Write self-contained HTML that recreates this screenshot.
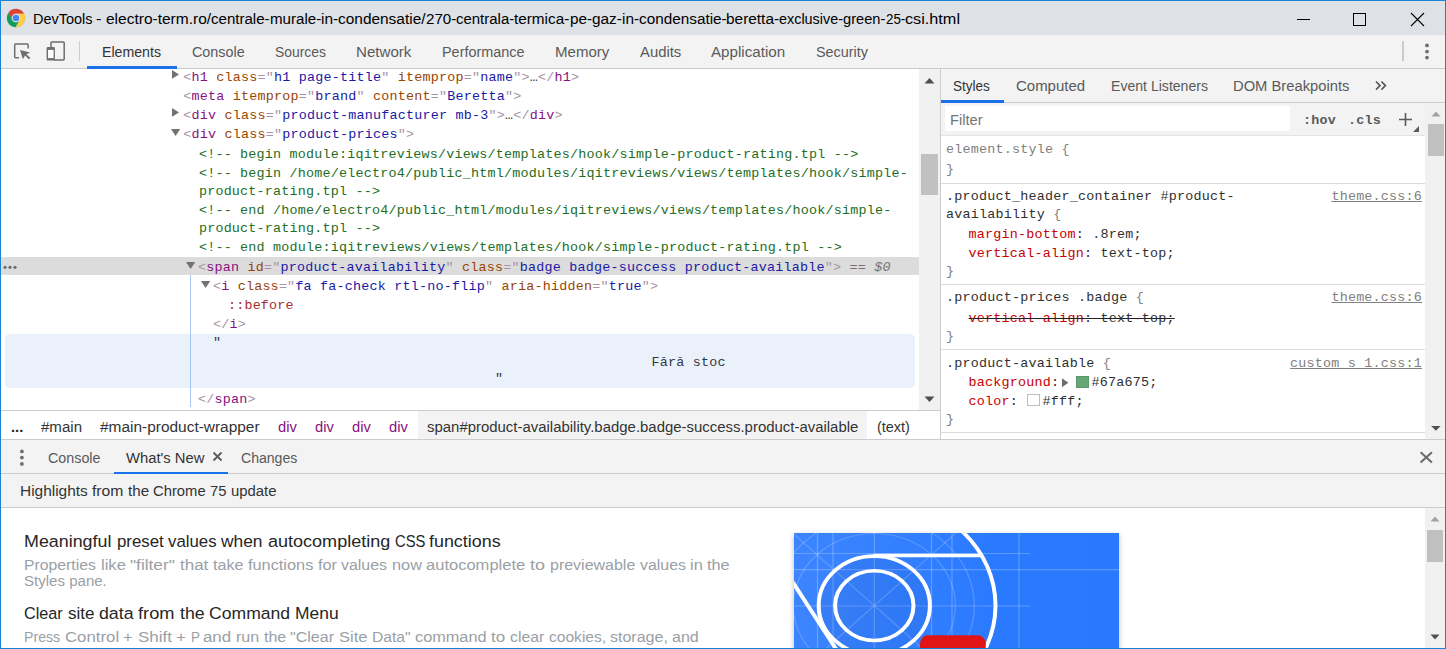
<!DOCTYPE html>
<html lang="en">
<head>
<meta charset="utf-8">
<title>DevTools</title>
<style>
html,body{margin:0;padding:0;}
body{width:1446px;height:649px;overflow:hidden;position:relative;background:#fff;font-family:'Liberation Sans',sans-serif;}
#win{position:absolute;left:0;top:0;width:1446px;height:649px;box-sizing:border-box;border:1px solid #1883d7;overflow:hidden;}
.abs{position:absolute;}
.s{position:absolute;display:inline-block;white-space:pre;line-height:20px;font-family:'Liberation Sans',sans-serif;transform-origin:0 50%;}
.m{position:absolute;white-space:pre;line-height:19px;font-size:13.4px;letter-spacing:0.21px;font-family:'Liberation Mono',monospace;color:#222;}
.tg{color:#881280}.br{color:#a894a6}.an{color:#994500}.av{color:#1a1aa6}.cm{color:#236e25}.el{color:#333}.eq{color:#737373;font-style:italic}
.ps{color:#a82e2e}.tx{color:#303942}
.g{color:#808080}.sel{color:#303030}.pn{color:#c80000}.pv{color:#303030}
.strike{text-decoration:line-through;text-decoration-color:#222}
.lnk{color:#808080;text-decoration:underline}
#titlebar{left:0;top:0;width:1444px;height:34px;background:#dee1e6;}
#toolbar{left:0;top:34px;width:1444px;height:33px;background:#f3f3f3;border-bottom:1px solid #cdcdcd;}
.hl{background:#1a73e8;}
</style>
</head>
<body>
<div id="win">
<div class="abs" style="left:-1px;top:-1px;width:1446px;height:649px;">
<!-- coordinates inside this wrapper equal page coordinates -->

<div class="abs" style="left:1px;top:1px;width:1444px;height:34px;background:#dee1e6"></div>
<div class="abs" style="left:1px;top:35px;width:1444px;height:33px;background:#f3f3f3"></div>
<div class="abs" style="left:1px;top:68px;width:1444px;height:1px;background:#cbcbcb"></div>

<!-- chrome logo -->
<svg class="abs" style="left:6px;top:7.75px" width="20" height="20" viewBox="0 0 48 48">
 <circle cx="24.2" cy="24.8" r="22.3" fill="#000" fill-opacity="0.12"/>
 <path d="M24 14 L43.6 14 A22 22 0 0 0 5.54 12.03 L15.34 29 A10 10 0 0 1 24 14 Z" fill="#db4437"/>
 <path d="M32.66 29 L22.86 45.97 A22 22 0 0 0 43.6 14 L24 14 A10 10 0 0 1 32.66 29 Z" fill="#ffcd40"/>
 <path d="M15.34 29 L5.54 12.03 A22 22 0 0 0 22.86 45.97 L32.66 29 A10 10 0 0 1 15.34 29 Z" fill="#0f9d58"/>
 <circle cx="24" cy="24" r="10.3" fill="#f1f1f1"/>
 <circle cx="24" cy="24" r="8" fill="#4285f4"/>
</svg>

<!-- window controls -->
<div class="abs" style="left:1297px;top:19px;width:13px;height:1px;background:#000"></div>
<div class="abs" style="left:1353px;top:13px;width:11px;height:11px;border:1px solid #000"></div>
<svg class="abs" style="left:1410px;top:12px" width="15" height="15" viewBox="0 0 15 15"><path d="M1 1 L14 14 M14 1 L1 14" stroke="#000" stroke-width="1.1" fill="none"/></svg>

<!-- toolbar icons -->
<svg class="abs" style="left:0;top:36px" width="90" height="32" viewBox="0 36 90 32">
 <path d="M18.9 57.65 H15.6 Q14.7 57.65 14.7 56.75 V44.9 Q14.7 44 15.6 44 H27.25 Q28.15 44 28.15 44.9 V48.4" fill="none" stroke="#6e6e6e" stroke-width="1.5"/>
 <path d="M20 50.1 L30.2 52.4 L26.4 54.3 L30.3 58 L28.9 59.3 L25 55.6 L22.9 59.2 Z" fill="#6e6e6e"/>
 <path d="M51 47.5 V42.7 Q51 41.9 51.8 41.9 H63.4 Q64.2 41.9 64.2 42.7 V59.1 Q64.2 59.9 63.4 59.9 H54" fill="none" stroke="#6e6e6e" stroke-width="1.5"/>
 <rect x="46.6" y="47.1" width="8.3" height="13.5" rx="1" fill="#6e6e6e"/>
 <rect x="48" y="49.9" width="5.6" height="8.2" fill="#fdfdfd"/>
</svg>
<div class="abs" style="left:79px;top:41px;width:1px;height:20px;background:#ccc"></div>
<div class="abs" style="left:1402px;top:41px;width:2px;height:20px;background:#cbcbcb"></div>
<svg class="abs" style="left:1423px;top:42px" width="8" height="20" viewBox="0 0 8 20"><circle cx="4" cy="3.4" r="1.9" fill="#6e6e6e"/><circle cx="4" cy="9.6" r="1.9" fill="#6e6e6e"/><circle cx="4" cy="15.6" r="1.9" fill="#6e6e6e"/></svg>
<div class="abs hl" style="left:87px;top:66px;width:90px;height:3px"></div>

<!-- elements panel -->
<div class="abs" style="left:1px;top:257px;width:918px;height:18px;background:#dcdcdc"></div>
<div class="abs" style="left:5px;top:334px;width:910px;height:54px;background:#ebf1fb;border-radius:5px"></div>
<div class="abs" style="left:190px;top:275px;width:1px;height:132px;background:#a9c7f3"></div>
<svg class="abs" style="left:3px;top:264px" width="16" height="7" viewBox="3 264 16 7"><circle cx="5.1" cy="267.3" r="1.6" fill="#6e6e6e"/><circle cx="10" cy="267.3" r="1.6" fill="#6e6e6e"/><circle cx="15" cy="267.3" r="1.6" fill="#6e6e6e"/></svg>
<!-- tree arrows -->
<svg class="abs" style="left:172.2px;top:70.2px" width="10" height="10" viewBox="0 0 10 10"><path d="M0 0 L7 4.4 L0 8.8 Z" fill="#727272"/></svg>
<svg class="abs" style="left:172.2px;top:108.2px" width="10" height="10" viewBox="0 0 10 10"><path d="M0 0 L7 4.4 L0 8.8 Z" fill="#727272"/></svg>
<svg class="abs" style="left:170.9px;top:128.9px" width="10" height="10" viewBox="0 0 10 10"><path d="M0 0 L9.2 0 L4.6 7 Z" fill="#727272"/></svg>
<svg class="abs" style="left:185.7px;top:261.9px" width="10" height="10" viewBox="0 0 10 10"><path d="M0 0 L9.2 0 L4.6 7 Z" fill="#727272"/></svg>
<svg class="abs" style="left:200.5px;top:280.9px" width="10" height="10" viewBox="0 0 10 10"><path d="M0 0 L9.2 0 L4.6 7 Z" fill="#727272"/></svg>

<!-- elements scrollbar -->
<div class="abs" style="left:919px;top:69px;width:21px;height:341px;background:#f1f1f1"></div>
<div class="abs" style="left:921px;top:154px;width:17px;height:41px;background:#c1c1c1"></div>
<svg class="abs" style="left:924px;top:77px" width="11" height="7" viewBox="0 0 11 7"><path d="M0.5 6.5 L5.5 1 L10.5 6.5 Z" fill="#505050"/></svg>
<svg class="abs" style="left:924px;top:396px" width="11" height="7" viewBox="0 0 11 7"><path d="M0.5 0.5 L5.5 6 L10.5 0.5 Z" fill="#505050"/></svg>
<div class="abs" style="left:940px;top:69px;width:1px;height:370px;background:#ccc"></div>

<!-- breadcrumbs -->
<div class="abs" style="left:1px;top:410px;width:939px;height:1px;background:#ccc"></div>
<div class="abs" style="left:418px;top:411px;width:449px;height:28px;background:#f3f3f3"></div>
<div class="abs" style="left:1px;top:439px;width:1444px;height:1px;background:#ccc"></div>

<!-- styles sidebar -->
<div class="abs" style="left:941px;top:69px;width:504px;height:33px;background:#f3f3f3"></div>
<div class="abs" style="left:941px;top:102px;width:504px;height:1px;background:#ccc"></div>
<div class="abs hl" style="left:941px;top:100px;width:63px;height:3px"></div>
<div class="abs" style="left:941px;top:103px;width:484px;height:32px;background:#f3f3f3"></div>
<div class="abs" style="left:941px;top:135px;width:484px;height:1px;background:#e4e4e4"></div>
<div class="abs" style="left:945px;top:106px;width:345px;height:25px;background:#fff"></div>
<svg class="abs" style="left:1375px;top:80px" width="12" height="11" viewBox="0 0 12 11"><path d="M1 1.5 L5 5.6 L1 9.7 M6.4 1.5 L10.4 5.6 L6.4 9.7" fill="none" stroke="#5a5a5a" stroke-width="1.7"/></svg>
<div class="m" style="left:1303px;top:111px;font-weight:bold;color:#5a5a5a">:hov</div>
<div class="m" style="left:1348px;top:111px;font-weight:bold;color:#5a5a5a">.cls</div>
<svg class="abs" style="left:1398px;top:112px" width="22" height="22" viewBox="0 0 22 22"><path d="M7.5 1 V14 M1 7.5 H14" stroke="#5a5a5a" stroke-width="1.6" fill="none"/><path d="M21 14 V20 H15 Z" fill="#5a5a5a"/></svg>
<div class="abs" style="left:941px;top:183px;width:484px;height:1px;background:#dcdcdc"></div>
<div class="abs" style="left:941px;top:284px;width:484px;height:1px;background:#dcdcdc"></div>
<div class="abs" style="left:941px;top:349px;width:484px;height:1px;background:#dcdcdc"></div>
<div class="abs" style="left:941px;top:432px;width:484px;height:1px;background:#dcdcdc"></div>
<!-- swatches -->
<svg class="abs" style="left:1061px;top:377px" width="9" height="12" viewBox="0 0 9 12"><path d="M1 1.2 L7.4 5.7 L1 10.2 Z" fill="#6e6e6e"/></svg>
<div class="abs" style="left:1076px;top:376px;width:11px;height:10px;background:#67a675;border:1px solid #5a9a68"></div>
<div class="abs" style="left:1027px;top:394px;width:11px;height:10px;background:#fff;border:1px solid #bdbdbd"></div>
<!-- styles scrollbar -->
<div class="abs" style="left:1425px;top:103px;width:20px;height:336px;background:#f1f1f1"></div>
<div class="abs" style="left:1428px;top:124px;width:16px;height:32px;background:#c1c1c1"></div>
<svg class="abs" style="left:1431px;top:111px" width="10" height="6" viewBox="0 0 10 6"><path d="M0.5 5.5 L5 0.5 L9.5 5.5 Z" fill="#a3a3a3"/></svg>
<svg class="abs" style="left:1431px;top:426px" width="10" height="6" viewBox="0 0 10 6"><path d="M0.2 0 L4.9 4.8 L9.6 0 Z" fill="#505050"/></svg>

<!-- drawer -->
<div class="abs" style="left:1px;top:440px;width:1444px;height:33px;background:#f3f3f3"></div>
<div class="abs" style="left:1px;top:473px;width:1444px;height:1px;background:#ccc"></div>
<div class="abs hl" style="left:114px;top:472px;width:114px;height:2px"></div>
<div class="abs" style="left:1px;top:474px;width:1444px;height:33px;background:#f3f3f3"></div>
<div class="abs" style="left:1px;top:507px;width:1444px;height:1px;background:#ccc"></div>
<svg class="abs" style="left:18px;top:447px" width="8" height="20" viewBox="0 0 8 20"><circle cx="3.9" cy="4.4" r="1.9" fill="#6e6e6e"/><circle cx="3.9" cy="10.6" r="1.9" fill="#6e6e6e"/><circle cx="3.9" cy="16.9" r="1.9" fill="#6e6e6e"/></svg>
<svg class="abs" style="left:212px;top:451px" width="11" height="11" viewBox="0 0 11 11"><path d="M1.5 1.5 L9.5 9.5 M9.5 1.5 L1.5 9.5" stroke="#5a5a5a" stroke-width="1.8" fill="none"/></svg>
<svg class="abs" style="left:1418px;top:450px" width="16" height="15" viewBox="1418 450 16 15"><path d="M1420.6 452.2 L1431.9 462.6 M1431.9 452.2 L1420.6 462.6" stroke="#6a6a6a" stroke-width="2" fill="none"/></svg>
<!-- drawer scrollbar -->
<div class="abs" style="left:1425px;top:508px;width:20px;height:140px;background:#f1f1f1"></div>
<div class="abs" style="left:1427px;top:530px;width:16px;height:32px;background:#c1c1c1"></div>
<svg class="abs" style="left:1430px;top:516px" width="10" height="6" viewBox="0 0 10 6"><path d="M0.5 5.5 L5 0.5 L9.5 5.5 Z" fill="#a3a3a3"/></svg>
<svg class="abs" style="left:1430px;top:634px" width="10" height="6" viewBox="0 0 10 6"><path d="M0.5 0.5 L5 5.5 L9.5 0.5 Z" fill="#505050"/></svg>

<!-- what's new image -->
<div class="abs" style="left:794px;top:533px;width:325px;height:130px;box-shadow:0 2px 5px rgba(0,0,0,.28)"></div>
<svg class="abs" style="left:794px;top:533px" width="325" height="116" viewBox="794 533 325 116">
 <defs><linearGradient id="bg" x1="0" y1="0" x2="1" y2="0"><stop offset="0" stop-color="#3d85ff"/><stop offset="0.62" stop-color="#2a7aff"/><stop offset="1" stop-color="#2979ff"/></linearGradient></defs>
 <rect x="794" y="533" width="325" height="116" fill="url(#bg)"/>
 <g stroke="#fff" stroke-opacity="0.24" stroke-width="1.2" fill="none">
  <path d="M817.5 533 V649 M833 533 V649 M874.3 533 V649 M931.5 533 V649 M952 533 V649 M1019 533 V649"/>
  <path d="M794 553.5 H1030 M794 569.7 H1119 M794 606 H1030"/>
 </g>
 <g transform="translate(874.3 605.6) scale(1 0.89)">
  <circle r="55.6" fill="#1d4fb8" fill-opacity="0.12"/>
  <g stroke="#fff" stroke-opacity="0.2" stroke-width="1.2" fill="none">
   <circle r="81"/><circle r="100"/>
   <path d="M-90 -90 L90 90 M90 -90 L-90 90"/>
  </g>
  <g stroke="#fff" stroke-width="4" fill="none">
   <circle r="39.2"/>
   <circle r="55.6"/>
   <circle r="121.2"/>
   <path d="M0 -56.2 H108"/>
   <path d="M-36.8 51.3 L-92.3 -44.9"/>
  </g>
 </g>
 <rect x="920" y="635.3" width="65.7" height="30" rx="8" fill="#e01414"/>
</svg>

<span class="s" style="left:32.7px;top:9px;font-size:15.4px;transform:scaleX(0.9397);color:#000;">DevTools </span>
<span class="s" style="left:96.2px;top:9px;font-size:15.4px;transform:scaleX(1.0631);color:#000;">- </span>
<span class="s" style="left:106.2px;top:9px;font-size:15.4px;transform:scaleX(1.0072);color:#000;">electro-term.ro/</span>
<span class="s" style="left:211.3px;top:9px;font-size:15.4px;transform:scaleX(0.9785);color:#000;">centrale-</span>
<span class="s" style="left:269.9px;top:9px;font-size:15.4px;transform:scaleX(0.9814);color:#000;">murale-</span>
<span class="s" style="left:321.1px;top:9px;font-size:15.4px;transform:scaleX(0.9995);color:#000;">in-</span>
<span class="s" style="left:338.2px;top:9px;font-size:15.4px;transform:scaleX(1.0025);color:#000;">condensatie/</span>
<span class="s" style="left:425.7px;top:9px;font-size:15.4px;transform:scaleX(0.9834);color:#000;">270-</span>
<span class="s" style="left:456.0px;top:9px;font-size:15.4px;transform:scaleX(0.9718);color:#000;">centrala-</span>
<span class="s" style="left:514.2px;top:9px;font-size:15.4px;transform:scaleX(0.9947);color:#000;">termica-</span>
<span class="s" style="left:569.5px;top:9px;font-size:15.4px;transform:scaleX(0.9933);color:#000;">pe-</span>
<span class="s" style="left:591.6px;top:9px;font-size:15.4px;transform:scaleX(0.9982);color:#000;">gaz-</span>
<span class="s" style="left:621.5px;top:9px;font-size:15.4px;transform:scaleX(0.9995);color:#000;">in-</span>
<span class="s" style="left:638.6px;top:9px;font-size:15.4px;transform:scaleX(0.9950);color:#000;">condensatie-</span>
<span class="s" style="left:726.3px;top:9px;font-size:15.4px;transform:scaleX(1.0010);color:#000;">beretta-</span>
<span class="s" style="left:779.4px;top:9px;font-size:15.4px;transform:scaleX(0.9352);color:#000;">exclusive-</span>
<span class="s" style="left:843.4px;top:9px;font-size:15.4px;transform:scaleX(0.9506);color:#000;">green-</span>
<span class="s" style="left:885.7px;top:9px;font-size:15.4px;transform:scaleX(0.8674);color:#000;">25-</span>
<span class="s" style="left:905.0px;top:9px;font-size:15.4px;transform:scaleX(1.0542);color:#000;">csi.html</span>
<span class="s" style="left:102.0px;top:42px;font-size:15.4px;transform:scaleX(0.9196);color:#333;">Elements</span>
<span class="s" style="left:192.0px;top:42px;font-size:15.4px;transform:scaleX(0.9315);color:#5a5a5a;">Console</span>
<span class="s" style="left:274.5px;top:42px;font-size:15.4px;transform:scaleX(0.9014);color:#5a5a5a;">Sources</span>
<span class="s" style="left:356.0px;top:42px;font-size:15.4px;transform:scaleX(0.9813);color:#5a5a5a;">Network</span>
<span class="s" style="left:442.3px;top:42px;font-size:15.4px;transform:scaleX(0.9375);color:#5a5a5a;">Performance</span>
<span class="s" style="left:555.1px;top:42px;font-size:15.4px;transform:scaleX(0.9767);color:#5a5a5a;">Memory</span>
<span class="s" style="left:639.6px;top:42px;font-size:15.4px;transform:scaleX(0.9654);color:#5a5a5a;">Audits</span>
<span class="s" style="left:711.1px;top:42px;font-size:15.4px;transform:scaleX(0.9841);color:#5a5a5a;">Application</span>
<span class="s" style="left:815.8px;top:42px;font-size:15.4px;transform:scaleX(0.9351);color:#5a5a5a;">Security</span>
<span class="s" style="left:953.4px;top:76px;font-size:15.4px;transform:scaleX(0.8802);color:#333;">Styles</span>
<span class="s" style="left:1015.7px;top:76px;font-size:15.4px;transform:scaleX(0.9730);color:#5a5a5a;">Computed</span>
<span class="s" style="left:1111.2px;top:76px;font-size:15.4px;transform:scaleX(0.9143);color:#5a5a5a;">Event Listeners</span>
<span class="s" style="left:1233.4px;top:76px;font-size:15.4px;transform:scaleX(0.9583);color:#5a5a5a;">DOM Breakpoints</span>
<span class="s" style="left:950.3px;top:110px;font-size:15.4px;transform:scaleX(0.9561);color:#757575;">Filter</span>
<span class="s" style="left:10.8px;top:417px;font-size:15.4px;transform:scaleX(0.9510);color:#222;font-weight:bold;">...</span>
<span class="s" style="left:41.0px;top:417px;font-size:15.4px;transform:scaleX(0.9780);color:#333;">#main</span>
<span class="s" style="left:100.2px;top:417px;font-size:15.4px;transform:scaleX(1.0031);color:#333;">#main-product-wrapper</span>
<span class="s" style="left:277.9px;top:417px;font-size:15.4px;transform:scaleX(0.9549);color:#881280;">div</span>
<span class="s" style="left:315.0px;top:417px;font-size:15.4px;transform:scaleX(0.9549);color:#881280;">div</span>
<span class="s" style="left:352.2px;top:417px;font-size:15.4px;transform:scaleX(0.9549);color:#881280;">div</span>
<span class="s" style="left:389.3px;top:417px;font-size:15.4px;transform:scaleX(0.9600);color:#881280;">div</span>
<span class="s" style="left:427.0px;top:417px;font-size:15.4px;transform:scaleX(0.9701);color:#333;">span#product-availability.badge.badge-success.product-available</span>
<span class="s" style="left:877.1px;top:417px;font-size:15.4px;transform:scaleX(0.9383);color:#333;">(text)</span>
<span class="s" style="left:48.1px;top:448px;font-size:15.4px;transform:scaleX(0.9297);color:#5a5a5a;">Console</span>
<span class="s" style="left:126.0px;top:448px;font-size:15.4px;transform:scaleX(0.9605);color:#333;">What&#x27;s New</span>
<span class="s" style="left:240.7px;top:448px;font-size:15.4px;transform:scaleX(0.9138);color:#5a5a5a;">Changes</span>
<span class="s" style="left:20.1px;top:481px;font-size:15.4px;transform:scaleX(1.0020);color:#333;">Highlights </span>
<span class="s" style="left:92.1px;top:481px;font-size:15.4px;transform:scaleX(1.0210);color:#333;">from </span>
<span class="s" style="left:127.9px;top:481px;font-size:15.4px;transform:scaleX(0.9839);color:#333;">the </span>
<span class="s" style="left:153.2px;top:481px;font-size:15.4px;transform:scaleX(0.9619);color:#333;">Chrome </span>
<span class="s" style="left:209.9px;top:481px;font-size:15.4px;transform:scaleX(0.9599);color:#333;">75 </span>
<span class="s" style="left:230.5px;top:481px;font-size:15.4px;transform:scaleX(0.9669);color:#333;">update</span>
<span class="s" style="left:24.2px;top:532px;font-size:16.7px;transform:scaleX(1.0706);color:#262626;">Meaningful </span>
<span class="s" style="left:116.6px;top:532px;font-size:16.7px;transform:scaleX(1.0088);color:#262626;">preset </span>
<span class="s" style="left:168.1px;top:532px;font-size:16.7px;transform:scaleX(1.0064);color:#262626;">values </span>
<span class="s" style="left:221.3px;top:532px;font-size:16.7px;transform:scaleX(1.0405);color:#262626;">when </span>
<span class="s" style="left:267.6px;top:532px;font-size:16.7px;transform:scaleX(1.0802);color:#262626;">autocompleting </span>
<span class="s" style="left:394.9px;top:532px;font-size:16.7px;transform:scaleX(0.8864);color:#262626;">CSS </span>
<span class="s" style="left:429.4px;top:532px;font-size:16.7px;transform:scaleX(1.0717);color:#262626;">functions</span>
<span class="s" style="left:24.4px;top:555px;font-size:14px;transform:scaleX(1.1274);color:#9aa0a6;">Properties </span>
<span class="s" style="left:100.7px;top:555px;font-size:14px;transform:scaleX(1.1851);color:#9aa0a6;">like </span>
<span class="s" style="left:130.2px;top:555px;font-size:14px;transform:scaleX(1.2303);color:#9aa0a6;">&quot;filter&quot; </span>
<span class="s" style="left:179.8px;top:555px;font-size:14px;transform:scaleX(1.2135);color:#9aa0a6;">that </span>
<span class="s" style="left:212.9px;top:555px;font-size:14px;transform:scaleX(1.1487);color:#9aa0a6;">take </span>
<span class="s" style="left:247.7px;top:555px;font-size:14px;transform:scaleX(1.1655);color:#9aa0a6;">functions </span>
<span class="s" style="left:317.6px;top:555px;font-size:14px;transform:scaleX(1.1658);color:#9aa0a6;">for </span>
<span class="s" style="left:341.2px;top:555px;font-size:14px;transform:scaleX(1.1365);color:#9aa0a6;">values </span>
<span class="s" style="left:391.6px;top:555px;font-size:14px;transform:scaleX(1.1652);color:#9aa0a6;">now </span>
<span class="s" style="left:426.1px;top:555px;font-size:14px;transform:scaleX(1.1805);color:#9aa0a6;">autocomplete </span>
<span class="s" style="left:529.9px;top:555px;font-size:14px;transform:scaleX(1.2866);color:#9aa0a6;">to </span>
<span class="s" style="left:549.9px;top:555px;font-size:14px;transform:scaleX(1.1414);color:#9aa0a6;">previewable </span>
<span class="s" style="left:639.7px;top:555px;font-size:14px;transform:scaleX(1.1365);color:#9aa0a6;">values </span>
<span class="s" style="left:690.1px;top:555px;font-size:14px;transform:scaleX(1.1658);color:#9aa0a6;">in </span>
<span class="s" style="left:707.3px;top:555px;font-size:14px;transform:scaleX(1.1648);color:#9aa0a6;">the</span>
<span class="s" style="left:24.2px;top:571px;font-size:14px;transform:scaleX(1.0745);color:#9aa0a6;">Styles pane.</span>
<span class="s" style="left:24.2px;top:604px;font-size:16.7px;transform:scaleX(0.9724);color:#262626;">Clear </span>
<span class="s" style="left:67.5px;top:604px;font-size:16.7px;transform:scaleX(1.0215);color:#262626;">site </span>
<span class="s" style="left:98.8px;top:604px;font-size:16.7px;transform:scaleX(1.0627);color:#262626;">data </span>
<span class="s" style="left:138.2px;top:604px;font-size:16.7px;transform:scaleX(1.0943);color:#262626;">from </span>
<span class="s" style="left:179.8px;top:604px;font-size:16.7px;transform:scaleX(1.0623);color:#262626;">the </span>
<span class="s" style="left:209.4px;top:604px;font-size:16.7px;transform:scaleX(1.0539);color:#262626;">Command </span>
<span class="s" style="left:295.4px;top:604px;font-size:16.7px;transform:scaleX(1.0439);color:#262626;">Menu</span>
<span class="s" style="left:24.4px;top:627px;font-size:14px;transform:scaleX(1.0109);color:#9aa0a6;">Press </span>
<span class="s" style="left:64.5px;top:627px;font-size:14px;transform:scaleX(1.1992);color:#9aa0a6;">Control </span>
<span class="s" style="left:123.3px;top:627px;font-size:14px;transform:scaleX(1.1844);color:#9aa0a6;">+ </span>
<span class="s" style="left:137.6px;top:627px;font-size:14px;transform:scaleX(1.2103);color:#9aa0a6;">Shift </span>
<span class="s" style="left:176.2px;top:627px;font-size:14px;transform:scaleX(1.2092);color:#9aa0a6;">+ </span>
<span class="s" style="left:190.8px;top:627px;font-size:14px;transform:scaleX(0.9596);color:#9aa0a6;">P </span>
<span class="s" style="left:203.3px;top:627px;font-size:14px;transform:scaleX(1.2025);color:#9aa0a6;">and </span>
<span class="s" style="left:236.1px;top:627px;font-size:14px;transform:scaleX(1.1445);color:#9aa0a6;">run </span>
<span class="s" style="left:263.7px;top:627px;font-size:14px;transform:scaleX(1.1445);color:#9aa0a6;">the </span>
<span class="s" style="left:290.4px;top:627px;font-size:14px;transform:scaleX(1.1441);color:#9aa0a6;">&quot;Clear </span>
<span class="s" style="left:338.8px;top:627px;font-size:14px;transform:scaleX(1.1802);color:#9aa0a6;">Site </span>
<span class="s" style="left:371.9px;top:627px;font-size:14px;transform:scaleX(1.1185);color:#9aa0a6;">Data&quot; </span>
<span class="s" style="left:414.9px;top:627px;font-size:14px;transform:scaleX(1.1641);color:#9aa0a6;">command </span>
<span class="s" style="left:491.0px;top:627px;font-size:14px;transform:scaleX(1.2151);color:#9aa0a6;">to </span>
<span class="s" style="left:509.9px;top:627px;font-size:14px;transform:scaleX(1.1270);color:#9aa0a6;">clear </span>
<span class="s" style="left:548.5px;top:627px;font-size:14px;transform:scaleX(1.1119);color:#9aa0a6;">cookies, </span>
<span class="s" style="left:609.9px;top:627px;font-size:14px;transform:scaleX(1.1442);color:#9aa0a6;">storage, </span>
<span class="s" style="left:672.3px;top:627px;font-size:14px;transform:scaleX(1.1445);color:#9aa0a6;">and</span>
<div class="m" style="left:183.3px;top:68px"><span class="br">&lt;</span><span class="tg">h1</span> <span class="an">class</span><span class="br">="</span><span class="av">h1 page-title</span><span class="br">"</span> <span class="an">itemprop</span><span class="br">="</span><span class="av">name</span><span class="br">"</span><span class="br">&gt;</span><span class="el">…</span><span class="br">&lt;/</span><span class="tg">h1</span><span class="br">&gt;</span></div>
<div class="m" style="left:183.3px;top:87px"><span class="br">&lt;</span><span class="tg">meta</span> <span class="an">itemprop</span><span class="br">="</span><span class="av">brand</span><span class="br">"</span> <span class="an">content</span><span class="br">="</span><span class="av">Beretta</span><span class="br">"</span><span class="br">&gt;</span></div>
<div class="m" style="left:183.3px;top:106px"><span class="br">&lt;</span><span class="tg">div</span> <span class="an">class</span><span class="br">="</span><span class="av">product-manufacturer mb-3</span><span class="br">"</span><span class="br">&gt;</span><span class="el">…</span><span class="br">&lt;/</span><span class="tg">div</span><span class="br">&gt;</span></div>
<div class="m" style="left:183.3px;top:125px"><span class="br">&lt;</span><span class="tg">div</span> <span class="an">class</span><span class="br">="</span><span class="av">product-prices</span><span class="br">"</span><span class="br">&gt;</span></div>
<div class="m" style="left:198.9px;top:145px"><span class="cm">&lt;!-- begin module:iqitreviews/views/templates/hook/simple-product-rating.tpl --&gt;</span></div>
<div class="m" style="left:198.9px;top:164px"><span class="cm">&lt;!-- begin /home/electro4/public_html/modules/iqitreviews/views/templates/hook/simple-</span></div>
<div class="m" style="left:198.9px;top:182px"><span class="cm">product-rating.tpl --&gt;</span></div>
<div class="m" style="left:198.9px;top:201px"><span class="cm">&lt;!-- end /home/electro4/public_html/modules/iqitreviews/views/templates/hook/simple-</span></div>
<div class="m" style="left:198.9px;top:219px"><span class="cm">product-rating.tpl --&gt;</span></div>
<div class="m" style="left:198.9px;top:238px"><span class="cm">&lt;!-- end module:iqitreviews/views/templates/hook/simple-product-rating.tpl --&gt;</span></div>
<div class="m" style="left:198.1px;top:258px"><span class="br">&lt;</span><span class="tg">span</span> <span class="an">id</span><span class="br">="</span><span class="av">product-availability</span><span class="br">"</span> <span class="an">class</span><span class="br">="</span><span class="av">badge badge-success product-available</span><span class="br">"</span><span class="br">&gt;</span><span class="eq"> == $0</span></div>
<div class="m" style="left:212.9px;top:277px"><span class="br">&lt;</span><span class="tg">i</span> <span class="an">class</span><span class="br">="</span><span class="av">fa fa-check rtl-no-flip</span><span class="br">"</span> <span class="an">aria-hidden</span><span class="br">="</span><span class="av">true</span><span class="br">"</span><span class="br">&gt;</span></div>
<div class="m" style="left:227.9px;top:296px"><span class="ps">::before</span></div>
<div class="m" style="left:212.9px;top:315px"><span class="br">&lt;/</span><span class="tg">i</span><span class="br">&gt;</span></div>
<div class="m" style="left:212.9px;top:333px"><span class="tx">"</span></div>
<div class="m" style="left:651.5px;top:353px"><span class="tx">Fără stoc</span></div>
<div class="m" style="left:495.0px;top:369px"><span class="tx">"</span></div>
<div class="m" style="left:198.1px;top:390px"><span class="br">&lt;/</span><span class="tg">span</span><span class="br">&gt;</span></div>
<div class="m" style="left:946.1px;top:140px"><span class="g">element.style</span><span class="g"> {</span></div>
<div class="m" style="left:946.1px;top:160px"><span class="g">}</span></div>
<div class="m" style="left:946.1px;top:187px"><span class="sel">.product_header_container #product-</span></div>
<div class="m" style="left:946.1px;top:205px"><span class="sel">availability</span><span class="g"> {</span></div>
<div class="m" style="left:968.6px;top:225px"><span class="pn">margin-bottom</span><span class="pv">: .8rem;</span></div>
<div class="m" style="left:968.6px;top:244px"><span class="pn">vertical-align</span><span class="pv">: text-top;</span></div>
<div class="m" style="left:946.1px;top:262px"><span class="g">}</span></div>
<div class="m" style="left:946.1px;top:288px"><span class="sel">.product-prices .badge</span><span class="g"> {</span></div>
<div class="m" style="left:968.6px;top:309px"><span class="strike"><span class="pn">vertical-align</span><span class="pv">: text-top;</span></span></div>
<div class="m" style="left:946.1px;top:327px"><span class="g">}</span></div>
<div class="m" style="left:946.1px;top:354px"><span class="sel">.product-available</span><span class="g"> {</span></div>
<div class="m" style="left:968.6px;top:373px"><span class="pn">background</span><span class="pv">:</span></div>
<div class="m" style="left:1091.5px;top:373px"><span class="pv">#67a675;</span></div>
<div class="m" style="left:968.6px;top:392px"><span class="pn">color</span><span class="pv">: </span></div>
<div class="m" style="left:1042.5px;top:392px"><span class="pv">#fff;</span></div>
<div class="m" style="left:946.1px;top:410px"><span class="g">}</span></div>
<div class="m lnk" style="left:1331.4px;top:187px">theme.css:6</div>
<div class="m lnk" style="left:1331.4px;top:288px">theme.css:6</div>
<div class="m lnk" style="left:1290.1px;top:354px">custom_s_1.css:1</div>
</div>
</div>
</body>
</html>
